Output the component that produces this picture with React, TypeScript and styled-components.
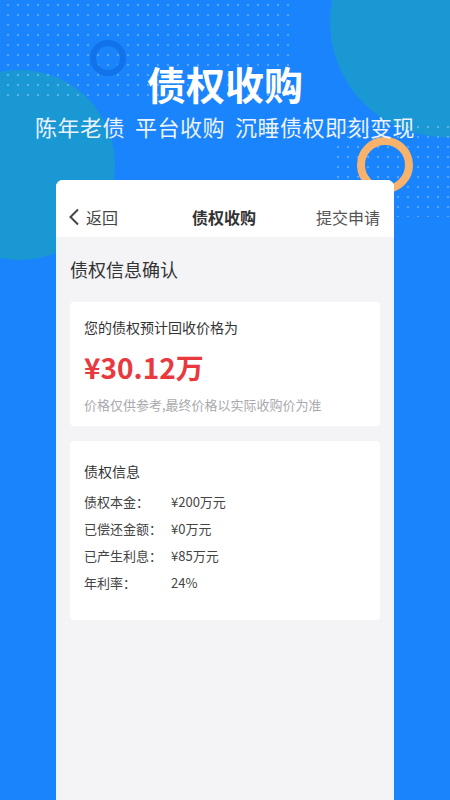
import React from 'react'
import styled, { createGlobalStyle } from 'styled-components'

const GlobalStyle = createGlobalStyle`
  html, body {
    margin: 0;
    padding: 0;
    background: #1a84fd;
  }
  body {
    font-family: "Noto Sans CJK SC", "Noto Sans", sans-serif;
  }
`

const Page = styled.div`
  position: relative;
  width: 450px;
  height: 800px;
  overflow: hidden;
  background: #1a84fd;
  display: flex;
  flex-direction: column;
`

const Dots = styled.div<{ $x: number; $y: number; $w: number; $h: number }>`
  position: absolute;
  left: ${(p) => p.$x}px;
  top: ${(p) => p.$y}px;
  width: ${(p) => p.$w}px;
  height: ${(p) => p.$h}px;
  background-image: radial-gradient(circle, rgba(255, 255, 255, 0.28) 1.1px, transparent 1.6px);
  background-size: 10px 10px;
  background-position: 3px 0;
`

const Blob = styled.div<{ $cx: number; $cy: number; $r: number }>`
  position: absolute;
  left: ${(p) => p.$cx - p.$r}px;
  top: ${(p) => p.$cy - p.$r}px;
  width: ${(p) => p.$r * 2}px;
  height: ${(p) => p.$r * 2}px;
  border-radius: 50%;
  background: #1a98d4;
`

const Ring = styled.div<{ $cx: number; $cy: number; $r: number; $w: number; $color: string }>`
  position: absolute;
  box-sizing: border-box;
  left: ${(p) => p.$cx - p.$r}px;
  top: ${(p) => p.$cy - p.$r}px;
  width: ${(p) => p.$r * 2}px;
  height: ${(p) => p.$r * 2}px;
  border-radius: 50%;
  border: ${(p) => p.$w}px solid ${(p) => p.$color};
`

const Hero = styled.header`
  position: relative;
  z-index: 1;
  padding-top: 63px;
  text-align: center;
  color: #fff;
`

const HeroTitle = styled.h1`
  margin: 0;
  font-size: 39px;
  line-height: 40px;
  font-weight: 700;
  letter-spacing: 0;
`

const HeroSub = styled.p`
  margin: 12px 0 0;
  display: flex;
  justify-content: center;
  gap: 10px;
  font-size: 22px;
  line-height: 22px;
  letter-spacing: 0.5px;
  color: #eaf3ff;
`

const Phone = styled.section`
  position: relative;
  z-index: 2;
  margin: 43px 56px 0;
  flex: 1;
  background: #f4f4f6;
  border-radius: 7px 7px 0 0;
  box-shadow: inset 2px 0 0 #eaf4fe, inset -2px 0 0 #eaf4fe;
  overflow: hidden;
`

const NavBar = styled.nav`
  height: 57px;
  box-sizing: border-box;
  padding: 16px 14px 0 12px;
  background: #fff;
  display: flex;
  align-items: center;
  justify-content: space-between;
`

const NavBack = styled.span`
  display: flex;
  align-items: center;
  gap: 6px;
  font-size: 16px;
  color: #444;
  width: 90px;
`

const NavTitle = styled.span`
  font-size: 16px;
  font-weight: 700;
  color: #333;
`

const NavAction = styled.span`
  width: 90px;
  text-align: right;
  font-size: 16px;
  color: #555;
`

const Body = styled.div`
  padding: 20px 14px 0;
`

const SectionTitle = styled.h2`
  margin: 0 0 21px;
  font-size: 18px;
  line-height: 24px;
  font-weight: 400;
  color: #333;
`

const Panel = styled.div<{ $pt: number; $pb: number }>`
  background: #fff;
  border-radius: 4px;
  padding: ${(p) => p.$pt}px 14px ${(p) => p.$pb}px;
  margin-bottom: 15px;
`

const PanelTitle = styled.div`
  font-size: 14px;
  line-height: 20px;
  color: #333;
`

const Price = styled.div`
  margin-top: 12px;
  font-size: 28px;
  line-height: 36px;
  font-weight: 700;
  color: #e8393e;
`

const Note = styled.div`
  margin-top: 11px;
  font-size: 13px;
  line-height: 18px;
  color: #a9a9ad;
`

const Rows = styled.dl`
  margin: 7px 0 0;
`

const Row = styled.div`
  display: flex;
  height: 27px;
  align-items: center;
  font-size: 13px;
  color: #444;
`

const Label = styled.dt`
  width: 87px;
`

const Value = styled.dd`
  margin: 0;
`

const rows = [
  ['债权本金：', '¥200万元'],
  ['已偿还金额：', '¥0万元'],
  ['已产生利息：', '¥85万元'],
  ['年利率：', '24%'],
]

export default function App() {
  return (
    <Page>
      <GlobalStyle />
      <Blob $cx={20} $cy={165} $r={95} />
      <Blob $cx={445} $cy={22} $r={115} />
      <Dots $x={0} $y={0} $w={290} $h={100} />
      <Dots $x={330} $y={122} $w={120} $h={95} />
      <Ring $cx={108} $cy={58} $r={18} $w={6} $color="#1173e9" />
      <Ring $cx={385} $cy={165} $r={28} $w={8} $color="#f7b36c" />
      <Hero>
        <HeroTitle>债权收购</HeroTitle>
        <HeroSub>
          <span>陈年老债</span>
          <span>平台收购</span>
          <span>沉睡债权即刻变现</span>
        </HeroSub>
      </Hero>
      <Phone>
        <NavBar>
          <NavBack>
            <svg width="12" height="18" viewBox="0 0 12 18">
              <polyline points="10,1.5 2.5,9 10,16.5" fill="none" stroke="#444" strokeWidth="2" />
            </svg>
            返回
          </NavBack>
          <NavTitle>债权收购</NavTitle>
          <NavAction>提交申请</NavAction>
        </NavBar>
        <Body>
          <SectionTitle>债权信息确认</SectionTitle>
          <Panel $pt={15} $pb={12}>
            <PanelTitle>您的债权预计回收价格为</PanelTitle>
            <Price>¥30.12万</Price>
            <Note>价格仅供参考,最终价格以实际收购价为准</Note>
          </Panel>
          <Panel $pt={20} $pb={24}>
            <PanelTitle>债权信息</PanelTitle>
            <Rows>
              {rows.map(([k, v]) => (
                <Row key={k}>
                  <Label>{k}</Label>
                  <Value>{v}</Value>
                </Row>
              ))}
            </Rows>
          </Panel>
        </Body>
      </Phone>
    </Page>
  )
}
